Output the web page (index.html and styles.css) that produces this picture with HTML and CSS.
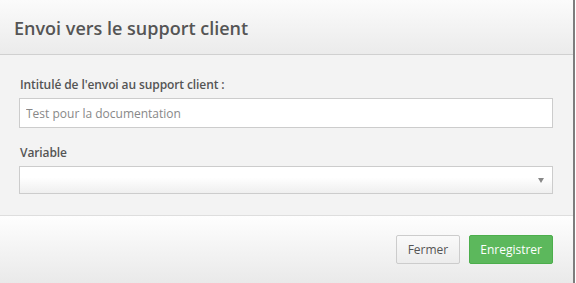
FILE: index.html
```html
<!DOCTYPE html>
<html lang="fr">
  <head>
    <meta charset="utf-8">
    <title>Envoi vers le support client</title>
    <meta name="viewport" content="width=device-width, initial-scale=1.0">
    <link rel="stylesheet" href="styles.css">
  </head>
  <body>
    <div class="modal">

      <div class="modal-header">
        <h4 class="modal-title">Envoi vers le support client</h4>
      </div>

      <form class="modal-body" novalidate>

        <div class="form-group">
          <label for="intitule">Intitulé de l'envoi au support client :</label>
          <input id="intitule" class="form-control" type="text" placeholder="Test pour la documentation">
        </div>

        <div class="form-group">
          <label for="variable">Variable</label>
          <div class="select-wrap">
            <select id="variable" class="form-control select-control">
              <option></option>
            </select>
            <span class="select-arrow" aria-hidden="true"></span>
          </div>
        </div>

      </form>

      <div class="modal-footer">
        <button type="button" class="btn btn-default">Fermer</button>
        <button type="button" class="btn btn-success">Enregistrer</button>
      </div>

    </div>
  </body>
</html>
```

FILE: styles.css
```css
html {
  box-sizing: border-box;
}

*,
*:before,
*:after {
  box-sizing: inherit;
}

body {
  margin: 0;
  background: #fff;
  font-family: "Open Sans", "Liberation Sans", Arial, sans-serif;
  font-size: 12px;
  color: #555;
}

.modal {
  width: 575px;
  height: 283px;
  border-right: 2px solid #7d7d7d;
  background: #f3f3f3;
  overflow: hidden;
}

.modal-header {
  height: 55px;
  padding: 0 14px;
  display: flex;
  align-items: center;
  background: linear-gradient(to bottom, #fbfbfb, #ebebeb);
  border-bottom: 1px solid #d0d0d0;
}

.modal-title {
  margin: 0;
  padding-top: 1px;
  font-size: 18px;
  font-weight: 600;
  color: #555;
}

.modal-body {
  margin: 0;
  padding: 21px 20px 5px 19px;
  border-bottom: 1px solid #dedede;
}

.form-group {
  margin-bottom: 16px;
}

label {
  display: block;
  margin: 0 0 5px 1px;
  font-weight: 600;
  line-height: 17px;
  letter-spacing: -0.1px;
  color: #555;
}

.form-control {
  display: block;
  width: 100%;
  height: 30px;
  padding: 0 6px;
  border: 1px solid #ccc;
  border-radius: 0;
  background: #fff;
  font-family: inherit;
  font-size: 12px;
  color: #555;
}

.form-control::placeholder {
  color: #888;
}

.select-wrap {
  position: relative;
}

.select-control {
  height: 28px;
  -webkit-appearance: none;
  appearance: none;
  background: linear-gradient(to bottom, #fff 40%, #efefef);
}

.select-arrow {
  position: absolute;
  right: 9px;
  top: 12px;
  border-left: 3.5px solid transparent;
  border-right: 3.5px solid transparent;
  border-top: 5px solid #888;
}

.modal-footer {
  height: 68px;
  padding: 19px 20px 0 0;
  display: flex;
  justify-content: flex-end;
  align-items: flex-start;
  gap: 9px;
  background: linear-gradient(to bottom, #fefefe, #e9e9e9);
}

.btn {
  height: 29px;
  border: 1px solid #ccc;
  border-radius: 2px;
  font-family: inherit;
  font-size: 12px;
  line-height: 27px;
}

.btn-default {
  background: linear-gradient(to bottom, #fafafa, #ececec);
  color: #555;
  padding: 0 11px;
}

.btn-success {
  background: #5cb85c;
  border-color: #4cae4c;
  color: #fff;
  padding: 0 10px;
}
```
